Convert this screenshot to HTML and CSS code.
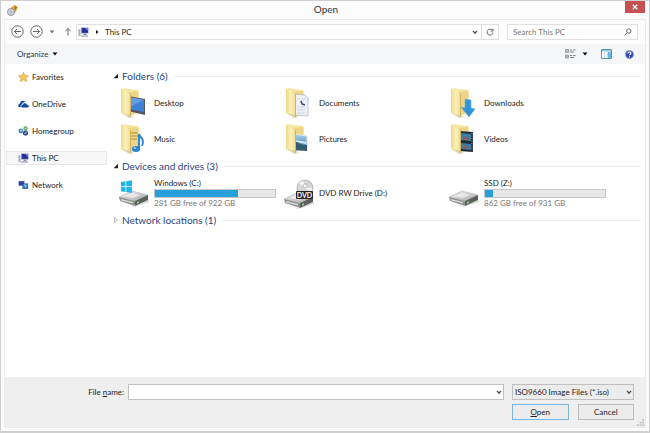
FILE: index.html
```html
<!DOCTYPE html>
<html lang="en">
  <head>
    <meta charset="UTF-8" />
    <meta name="viewport" content="width=device-width, initial-scale=1.0" />
    <title>Open</title>
    <link rel="stylesheet" href="styles.css" />
  </head>
  <body>
    <!-- shared shapes -->
    <svg class="defs" width="0" height="0">
      <defs>
        <linearGradient id="gold" x1="0" x2="1">
          <stop offset="0" stop-color="#f0da85" />
          <stop offset=".5" stop-color="#fcf1bd" />
          <stop offset="1" stop-color="#f0d683" />
        </linearGradient>
        <linearGradient id="metal" x1="0" y1="0" x2="1" y2="1">
          <stop offset="0" stop-color="#f4f4f4" />
          <stop offset="1" stop-color="#a4a4a4" />
        </linearGradient>
        <linearGradient id="sky" x1="0" y1="0" x2="0" y2="1">
          <stop offset="0" stop-color="#a9d4f0" />
          <stop offset="1" stop-color="#2b6ba8" />
        </linearGradient>
        <symbol id="folder-back" viewBox="0 0 30 32">
          <path d="M4 1l6 1 9 1 1 2v21l-8 3z" fill="#f6e6a2" />
          <path d="M9 5l10-1v20l-7 4z" fill="#edd486" />
        </symbol>
        <symbol id="folder-front" viewBox="0 0 30 32">
          <path d="M2 1l10 6v23l-2 1-8-5z" fill="url(#gold)" />
          <path d="M11 7l1 0v22l-1 1z" fill="#d3b562" />
          <path d="M3 26l8 5 4-1-3-2z" fill="#b9b1a0" opacity=".4" />
        </symbol>
        <symbol id="drive" viewBox="0 0 30 17">
          <path d="M2 12l11 5 17-7v2L14 17z" fill="#999" opacity=".4" />
          <path d="M0 7L13 1l16 4-13 6z" fill="url(#metal)" stroke="#aaa" stroke-width=".5" />
          <path d="M0 7l16 4v5L1 11z" fill="#909090" />
          <path d="M16 11l13-6v5l-13 6z" fill="#5e5e5e" />
          <path d="M2 9l12 3v1.500L2 10.500z" fill="#d8d8d8" />
          <path d="M5 6l8-3 8 2-7 3z" fill="#fff" opacity=".5" />
          <path d="M18 12l2-1v2l-2 1z" fill="#7ed07e" />
        </symbol>
        <symbol id="pc" viewBox="0 0 11 10">
          <path d="M.5 2h2v7h-2z" fill="#a8adc2" />
          <path d="M3 .5h7.500v6H3z" fill="#8d95b8" />
          <path d="M4 1h6v4.800H4z" fill="#26309c" />
          <path d="M7 1h3v3z" fill="#6e87dc" />
          <path d="M5.500 6.500h3v1.500h-3zM3 8.500h7v1H3z" fill="#858ba5" />
        </symbol>
        <symbol id="chevron" viewBox="0 0 6 6">
          <path d="M1 1.800l2 2.400 2-2.400" fill="none" stroke="#444" stroke-width="1.200" />
        </symbol>
        <symbol id="caret" viewBox="0 0 6 6">
          <path d="M.6 1.500h4.800L3 4.500z" />
        </symbol>
      </defs>
    </svg>

    <div class="window">
      <header class="titlebar">
        <svg class="app-icon" viewBox="0 0 11 11">
          <path d="M4 2l4-2 3 2-2 5-4 2z" fill="#e9b63c" />
          <path d="M7 1l3 1-2 4z" fill="#b5662e" />
          <circle cx="4" cy="7" r="3.500" fill="#d8d8e4" stroke="#777a92" stroke-width=".8" />
          <circle cx="4" cy="7" r="1" fill="#fff" stroke="#666" stroke-width=".5" />
        </svg>
        <h1>Open</h1>
        <button class="close" type="button" aria-label="Close">
          <svg viewBox="0 0 6 6"><path d="M.8 .8l4.400 4.400M5.200 .8L.8 5.200" stroke="#fff" stroke-width="1.300" /></svg>
        </button>
      </header>

      <div class="frame">
        <nav class="navbar">
          <button class="round" type="button" aria-label="Back">
            <svg viewBox="0 0 13 13"><circle cx="6.500" cy="6.500" r="5.700" /><path d="M10 6.500H3.500M6 4L3.500 6.500 6 9" /></svg>
          </button>
          <button class="round" type="button" aria-label="Forward">
            <svg viewBox="0 0 13 13"><circle cx="6.500" cy="6.500" r="5.700" /><path d="M3 6.500h6.500M7 4l2.500 2.500L7 9" /></svg>
          </button>
          <button class="recent" type="button" aria-label="Recent locations">
            <svg class="tiny"><use href="#caret" /></svg>
          </button>
          <button class="up" type="button" aria-label="Up">
            <svg viewBox="0 0 8 9"><path d="M4 8.500V1.500M1.300 4.200L4 1.500l2.700 2.700" /></svg>
          </button>
          <div class="address">
            <svg class="small-icon"><use href="#pc" /></svg>
            <svg class="tiny crumb" viewBox="0 0 6 6"><path d="M2 1l2.500 2L2 5z" /></svg>
            <a class="path" href="#">This PC</a>
            <button type="button" aria-label="Previous locations">
              <svg class="tiny"><use href="#chevron" /></svg>
            </button>
            <button class="refresh" type="button" aria-label="Refresh">
              <svg viewBox="0 0 8 8"><path d="M6.500 2.500A3 3 0 1 0 7 4.500M7 .5v2.500H4.500" /></svg>
            </button>
          </div>
          <div class="search">
            <input type="text" placeholder="Search This PC" aria-label="Search This PC" />
            <svg viewBox="0 0 8 8"><circle cx="4.800" cy="3" r="2.200" /><path d="M3.200 4.600L.7 7.300" /></svg>
          </div>
        </nav>

        <div class="toolbar">
          <button class="organize" type="button">
            Organize <svg class="tiny"><use href="#caret" /></svg>
          </button>
          <button class="views" type="button" aria-label="Change your view">
            <svg class="view-icon" viewBox="0 0 11 10">
              <path d="M.5.500h3v3h-3zM.5 6h3v3h-3z" fill="#b8bcc0" stroke="#84898e" stroke-width=".7" />
              <path d="M5 1h2M8 1h2.500M5 3h4M5 6.500h2M8 6.500h2.500M5 8.500h4" stroke="#7d8287" />
            </svg>
            <svg class="tiny"><use href="#caret" /></svg>
          </button>
          <button type="button" aria-label="Show the preview pane">
            <svg class="pane-icon" viewBox="0 0 11 10">
              <path d="M.5.500h10v9H.5z" fill="#fff" stroke="#5d93b5" />
              <path d="M1 1h9v1.500H1z" fill="#8ec3e0" />
              <path d="M7 3h3v6H7z" fill="#6cb4e4" />
              <path d="M3.500 3v6M6.500 3v6" stroke="#a9c9dc" stroke-width=".7" />
            </svg>
          </button>
          <button type="button" aria-label="Help">
            <svg class="help-icon" viewBox="0 0 9 9">
              <circle cx="4.500" cy="4.500" r="4" fill="#2c46b4" stroke="#8e9bd0" stroke-width=".8" />
              <path d="M3 3.500c0-2 3-2 3-.2 0 1-1.500 1-1.500 2M4.500 6.300v1" fill="none" stroke="#fff" stroke-width="1.100" />
            </svg>
          </button>
        </div>

        <div class="content">
          <ul class="sidebar">
            <li>
              <a href="#">
                <svg class="small-icon" viewBox="0 0 11 10"><path d="M5.500.300l1.400 3.200 3.600.3-2.700 2.300.9 3.600-3.200-1.900-3.200 1.900.9-3.600L.5 3.800l3.600-.3z" fill="#f6c956" stroke="#cf9236" stroke-width=".6" /></svg>
                Favorites
              </a>
            </li>
            <li>
              <a href="#">
                <svg class="small-icon" viewBox="0 0 11 10"><path d="M1 8C-.5 6.500.8 4.500 2 4.800 2 2 5.500.5 7.300 3 5 3 4 4.500 4 5.500 2.500 5.500 2.300 7 3 8z" fill="#0d4a9f" /><path d="M4 8.500c-1.300-.5-1-2.500.7-2.400C5 3.800 8.300 3.500 9 5.800c2.300.1 2.300 2.500.7 2.700z" fill="#0d4a9f" /></svg>
                OneDrive
              </a>
            </li>
            <li>
              <a href="#">
                <svg class="small-icon" viewBox="0 0 11 10"><circle cx="7.500" cy="2.500" r="2.200" fill="#69aa55" /><circle cx="2.800" cy="5" r="2.400" fill="#4b8ec0" /><circle cx="7.500" cy="7" r="2.600" fill="#314f98" /><path d="M2 5l2-1M6.500 3l2-1M6.500 7.500l2-1" stroke="#d5e9ef" /></svg>
                Homegroup
              </a>
            </li>
            <li>
              <a class="current" href="#">
                <svg class="small-icon"><use href="#pc" /></svg>
                This PC
              </a>
            </li>
            <li>
              <a href="#">
                <svg class="small-icon" viewBox="0 0 11 10"><path d="M.5 1h6v5h-6z" fill="#7385b8" /><path d="M1 1.500h5V5H1z" fill="#2b3fa4" /><path d="M4.500 3.500h5.500V9H4.500z" fill="#39518f" /><circle cx="7.200" cy="6.200" r="2.600" fill="#2f7fc4" /><path d="M6 5l2 .5-.5 2" stroke="#a8dcf0" fill="none" /></svg>
                Network
              </a>
            </li>
          </ul>

          <main class="files">
            <section>
              <h2><svg class="tiny" viewBox="0 0 6 6"><path d="M5 .8v4.400H.6z" /></svg>Folders (6)</h2>
              <div class="grid">
                <a class="item" href="#">
                  <svg class="icon" viewBox="0 0 30 32">
                    <use href="#folder-back" />
                    <path d="M9 9l17 3v16L9 24z" fill="#54595f" />
                    <path d="M10 10l15 3v12l-15-3z" fill="#3f83d6" />
                    <path d="M10 10l15 3-15 7z" fill="#7bb0ec" opacity=".6" />
                    <use href="#folder-front" />
                  </svg>
                  Desktop
                </a>
                <a class="item" href="#">
                  <svg class="icon" viewBox="0 0 30 32">
                    <use href="#folder-back" />
                    <path d="M10 7l11 1 3 3v18l-14-1z" fill="#eef2f7" stroke="#a7afb9" stroke-width=".7" />
                    <path d="M13 12h3M18 12h4M13 20h8M13 23h8M13 26h8" stroke="#c4ccd8" stroke-width=".8" />
                    <path d="M17 14l1 3 3 1" stroke="#2b4a7a" fill="none" stroke-width="1.500" />
                    <use href="#folder-front" />
                  </svg>
                  Documents
                </a>
                <a class="item" href="#">
                  <svg class="icon" viewBox="0 0 30 32">
                    <use href="#folder-back" />
                    <use href="#folder-front" />
                    <path d="M16 12l6 1v8l4 1-6 8-8-10 4 1z" fill="#2f93d8" stroke="#65b4e6" stroke-width=".6" />
                  </svg>
                  Downloads
                </a>
                <a class="item" href="#">
                  <svg class="icon" viewBox="0 0 30 32">
                    <use href="#folder-back" />
                    <path d="M12 10h7M12 13h7M12 16h6" stroke="#b98f31" />
                    <use href="#folder-front" />
                    <path d="M20 27V11c1 4 6 4 3 12" fill="none" stroke="#2b8ad0" stroke-width="2" />
                    <ellipse cx="17" cy="26" rx="4" ry="3" fill="#2485d2" />
                    <ellipse cx="16" cy="25" rx="1.500" ry="1" fill="#8cc9f3" />
                  </svg>
                  Music
                </a>
                <a class="item" href="#">
                  <svg class="icon" viewBox="0 0 30 32">
                    <use href="#folder-back" />
                    <path d="M9 11l14 2v15l-14-1z" fill="url(#sky)" stroke="#dfe7ec" />
                    <path d="M9 19c4-1 8 4 14 3v6l-14-1z" fill="#355b70" />
                    <path d="M10 17l12 2v2l-12-3z" fill="#e6f4fa" />
                    <use href="#folder-front" />
                  </svg>
                  Pictures
                </a>
                <a class="item" href="#">
                  <svg class="icon" viewBox="0 0 30 32">
                    <use href="#folder-back" />
                    <path d="M10 8l14 1v20l-14-1z" fill="#1e2b38" />
                    <path d="M12 10l10 1v7l-10-1zM12 20l10 1v6l-10-1z" fill="#3c7ca7" />
                    <path d="M14 16l3-3 3 5zM13 24l3-2 4 4z" fill="#a45544" />
                    <path d="M23 10v18" stroke="#d5dde2" stroke-width=".8" stroke-dasharray="1 1.500" />
                    <use href="#folder-front" />
                  </svg>
                  Videos
                </a>
              </div>
            </section>

            <section>
              <h2><svg class="tiny" viewBox="0 0 6 6"><path d="M5 .8v4.400H.6z" /></svg>Devices and drives (3)</h2>
              <div class="grid">
                <a class="item" href="#">
                  <svg class="icon" viewBox="0 0 30 32">
                    <use href="#drive" y="13" width="30" height="17" />
                    <path d="M2 5l4.500-.7v5H2zM7.300 4.200L13 3.300v6H7.300zM2 10h4.500v5L2 14.300zM7.300 10H13v6l-5.700-.9z" fill="#1fb5ea" />
                  </svg>
                  <div class="drive">
                    <span>Windows (C:)</span>
                    <div class="bar"><div class="used" style="width: 69%"></div></div>
                    <span class="free">281 GB free of 922 GB</span>
                  </div>
                </a>
                <a class="item" href="#">
                  <svg class="icon" viewBox="0 0 30 32">
                    <use href="#drive" y="15" width="30" height="17" />
                    <circle cx="21" cy="11" r="8" fill="#d4d6d8" stroke="#999" stroke-width=".6" />
                    <path d="M21 11l-6-5 4-2zM21 11l6 4 1-4z" fill="#f8f8f8" />
                    <circle cx="21" cy="9" r="2" fill="#fff" stroke="#999" stroke-width=".6" />
                    <rect x="12" y="14" width="17" height="8" rx="1" fill="#222" />
                    <text class="disc-label" x="20.500" y="20.500" text-anchor="middle">DVD</text>
                  </svg>
                  DVD RW Drive (D:)
                </a>
                <a class="item" href="#">
                  <svg class="icon" viewBox="0 0 30 32"><use href="#drive" y="13" width="30" height="17" /></svg>
                  <div class="drive">
                    <span>SSD (Z:)</span>
                    <div class="bar"><div class="used" style="width: 7%"></div></div>
                    <span class="free">862 GB free of 931 GB</span>
                  </div>
                </a>
              </div>
            </section>

            <section>
              <h2 class="collapsed"><svg class="tiny" viewBox="0 0 6 6"><path d="M1.500 .6L4.500 3l-3 2.400z" /></svg>Network locations (1)</h2>
            </section>
          </main>
        </div>

        <form class="footer">
          <label for="filename">File <u>n</u>ame:</label>
          <div class="combo">
            <input id="filename" type="text" />
            <svg class="tiny"><use href="#chevron" /></svg>
          </div>
          <div class="combo type">
            <select aria-label="File type">
              <option>ISO9660 Image Files (*.iso)</option>
            </select>
            <svg class="tiny"><use href="#chevron" /></svg>
          </div>
          <div class="buttons">
            <button class="btn primary" type="button"><u>O</u>pen</button>
            <button class="btn" type="button">Cancel</button>
          </div>
          <svg class="grip" viewBox="0 0 8 8"><path d="M6 0h2v2H6zM3 3h2v2H3zM6 3h2v2H6zM0 6h2v2H0zM3 6h2v2H3zM6 6h2v2H6z" fill="#c4c4c4" /></svg>
        </form>
      </div>
    </div>
  </body>
</html>
```
FILE: styles.css
```css
* {
  margin: 0;
  padding: 0;
  box-sizing: border-box;
}

body {
  font: 8px/10px Lato, "Open Sans", sans-serif;
  color: #222;
}

a {
  color: inherit;
  text-decoration: none;
}

ul {
  list-style: none;
}

svg {
  display: block;
  flex: none;
}

button {
  display: flex;
  align-items: center;
  justify-content: center;
  border: 0;
  background: none;
  font: inherit;
  color: inherit;
}

input,
select {
  font: inherit;
  color: inherit;
  outline: 0;
}

.defs {
  position: absolute;
}

.tiny {
  width: 6px;
  height: 6px;
}

.small-icon {
  width: 11px;
  height: 10px;
}

/* window */
.window {
  display: flex;
  flex-direction: column;
  min-height: 100vh;
  padding: 0 3px 3px;
  background: #fcfcfc;
  border: 1px solid #cfcfcf;
  border-width: 1px 1px 2px;
}

.titlebar {
  display: grid;
  grid-template-columns: 1fr auto 1fr;
  height: 18px;
  padding: 0 1px 0 3px;
}

.app-icon {
  width: 11px;
  height: 11px;
  align-self: center;
}

.titlebar h1 {
  font-size: 10px;
  font-weight: normal;
  line-height: 17px;
  color: #333;
}

.close {
  justify-self: end;
  width: 20px;
  height: 12px;
  background: #c75050;
}

.close svg {
  width: 6px;
  height: 6px;
}

.frame {
  flex: 1;
  display: flex;
  flex-direction: column;
  border: 1px solid #ebebeb;
  background: #fff;
}

/* navigation */
.navbar {
  display: flex;
  align-items: center;
  height: 24px;
  padding: 0 7px 1px 6px;
  background: #fdfdfd;
}

.round svg {
  width: 13px;
  height: 13px;
}

.round + .round {
  margin-left: 6px;
}

.round svg,
.up svg,
.refresh svg,
.search svg {
  fill: none;
  stroke: #666;
}

.recent {
  width: 18px;
  fill: #777;
}

.up {
  width: 14px;
  margin-right: 1px;
}

.up svg {
  width: 8px;
  height: 9px;
}

.address,
.search {
  display: flex;
  align-items: center;
  height: 16px;
  border: 1px solid #e0e0e0;
  background: #fff;
}

.address {
  flex: 1;
  padding-left: 1px;
}

.crumb {
  margin: 0 5px;
}

.path {
  flex: 1;
}

.address button {
  width: 13px;
  height: 14px;
}

.address .refresh {
  width: 17px;
  border-left: 1px solid #e0e0e0;
}

.refresh svg,
.search svg {
  width: 8px;
  height: 8px;
}

.search {
  width: 131px;
  margin-left: 8px;
  padding: 0 5px;
}

.search input {
  flex: 1;
  min-width: 0;
  border: 0;
  background: none;
}

.search input::placeholder {
  color: #757575;
}

/* toolbar */
.toolbar {
  display: flex;
  align-items: center;
  gap: 13px;
  height: 20px;
  padding: 0 11px 0 12px;
  background: #f4f6f8;
}

.organize {
  gap: 4px;
  margin-right: auto;
  color: #2a3550;
}

.views {
  gap: 6px;
}

.view-icon,
.pane-icon {
  width: 11px;
  height: 10px;
}

.help-icon {
  width: 9px;
  height: 9px;
}

/* content */
.content {
  flex: 1;
  display: flex;
}

.sidebar {
  display: flex;
  flex-direction: column;
  gap: 13px;
  width: 102px;
  padding: 6px 0 0 1px;
}

.sidebar a {
  display: flex;
  align-items: center;
  gap: 3px;
  height: 14px;
  padding-left: 11px;
  border: 1px solid transparent;
}

.sidebar .current {
  background: #f7f7f7;
  border-color: #e9e9e9;
}

.files {
  flex: 1;
  padding: 3px 4px 0 6px;
}

.files h2 {
  display: flex;
  align-items: center;
  gap: 3px;
  height: 18px;
  font-size: 10px;
  font-weight: normal;
  color: #2b3f7e;
}

.files h2 svg {
  fill: #222;
}

.files h2.collapsed svg {
  fill: #fff;
  stroke: #999;
  stroke-width: 0.7;
}

.files h2::after {
  content: "";
  flex: 1;
  height: 1px;
  margin-left: 3px;
  background: #ececec;
}

.grid {
  display: grid;
  grid-template-columns: repeat(auto-fill, 157px);
  grid-auto-rows: 36px;
  column-gap: 8px;
  padding-left: 6px;
}

.item {
  display: flex;
  align-items: center;
  gap: 5px;
}

.icon {
  width: 30px;
  height: 32px;
}

.drive {
  flex: 1;
}

.drive span {
  display: block;
}

.bar {
  height: 9px;
  margin-top: 1px;
  border: 1px solid #c8c8c8;
  background: #e6e6e6;
}

.used {
  height: 100%;
  background: #26a0da;
}

.drive .free {
  color: #767676;
}

.disc-label {
  font-size: 7px;
  font-weight: bold;
  fill: #fff;
}

/* footer */
.footer {
  display: grid;
  grid-template-columns: 119px 1fr 122px;
  align-content: start;
  gap: 4px 8px;
  position: relative;
  height: 50px;
  padding: 7px 11px 0 0;
  background: #efefef;
}

.footer label {
  line-height: 16px;
  text-align: right;
}

.footer label + .combo {
  margin-left: -4px;
}

.combo {
  position: relative;
  height: 16px;
}

.combo input,
.combo select {
  display: block;
  width: 100%;
  height: 100%;
  padding: 0 12px 0 2px;
  border: 1px solid #bfbfbf;
  border-radius: 0;
  background: #fff;
  appearance: none;
}

.combo select {
  background: #ececec;
}

.combo svg {
  position: absolute;
  right: 2px;
  top: 5px;
}

.buttons {
  grid-column: 3;
  display: grid;
  grid-template-columns: 1fr 1fr;
  gap: 9px;
}

.btn {
  height: 16px;
  border: 1px solid #bdbdbd;
  background: #ececec;
}

.btn.primary {
  border-color: #7eb4dd;
}

.grip {
  position: absolute;
  right: 1px;
  bottom: 1px;
  width: 7px;
  height: 7px;
}
```
